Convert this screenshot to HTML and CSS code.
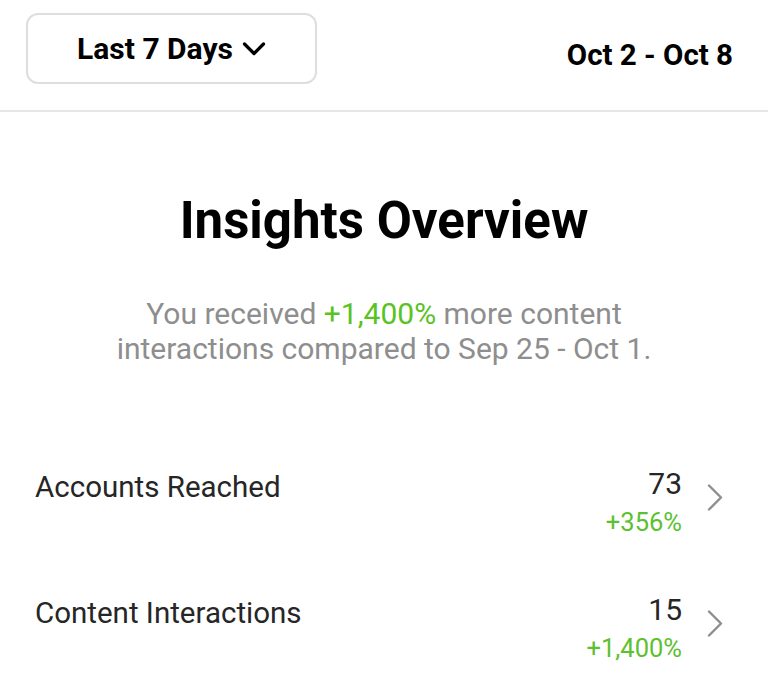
FILE: index.html
```html
<!DOCTYPE html>
<html>
<head>
<meta charset="utf-8">
<link rel="stylesheet" href="styles.css">
</head>
<body>
<header class="topbar">
  <button class="range-btn">
    <span class="range-label">Last 7 Days</span>
    <svg class="chev-down" width="24" height="16" viewBox="0 0 24 16"><path d="M2.5 3 L12 12.5 L21.5 3" fill="none" stroke="#000" stroke-width="3.2" stroke-linecap="round" stroke-linejoin="round"/></svg>
  </button>
  <div class="range-dates">Oct 2 - Oct 8</div>
</header>
<main class="content">
  <h1 class="title">Insights Overview</h1>
  <p class="summary">You received <span class="up">+1,400%</span> more content interactions compared to Sep 25 - Oct 1.</p>
  <ul class="metrics">
    <li class="metric">
      <span class="metric-name">Accounts Reached</span>
      <span class="metric-vals"><span class="metric-num">73</span><span class="metric-delta">+356%</span></span>
      <svg class="chev-right" width="16" height="27" viewBox="0 0 16 27"><path d="M2 1.5 L14 13.5 L2 25.5" fill="none" stroke="#8e8e8e" stroke-width="2.4" stroke-linecap="round" stroke-linejoin="round"/></svg>
    </li>
    <li class="metric">
      <span class="metric-name">Content Interactions</span>
      <span class="metric-vals"><span class="metric-num">15</span><span class="metric-delta">+1,400%</span></span>
      <svg class="chev-right" width="16" height="27" viewBox="0 0 16 27"><path d="M2 1.5 L14 13.5 L2 25.5" fill="none" stroke="#8e8e8e" stroke-width="2.4" stroke-linecap="round" stroke-linejoin="round"/></svg>
    </li>
  </ul>
</main>
</body>
</html>
```
FILE: styles.css
```css
* { box-sizing: border-box; }
html, body { margin: 0; padding: 0; background: #fff; }
body { font-family: Roboto, "Noto Sans", sans-serif; color: #000; width: 768px; height: 687px; overflow: hidden; }

.topbar {
  display: flex;
  align-items: center;
  justify-content: space-between;
  padding: 13px 35px 26px 26px;
  border-bottom: 2px solid #e6e6e6;
}
.range-btn {
  display: flex;
  align-items: center;
  justify-content: center;
  gap: 9px;
  width: 291px;
  height: 71px;
  border: 2px solid #dedede;
  border-radius: 12px;
  background: #fff;
  font-family: inherit;
  padding: 0;
}
.range-label { font-size: 30px; font-weight: 700; color: #000; line-height: 36px; }
.chev-down { display: block; }
.range-dates { font-size: 29.5px; font-weight: 700; line-height: 36px; padding-top: 12px; }

.content { padding: 0; }
.title {
  margin: 79px 0 0;
  text-align: center;
  font-size: 51px;
  font-weight: 700;
  line-height: 60px;
}
.summary {
  margin: 45px auto 0;
  width: 590px;
  text-align: center;
  color: #8e8e8e;
  font-size: 30px;
  line-height: 35px;
}
.up { color: #58c322; }

.metrics { list-style: none; margin: 100px 0 0; padding: 0 45px 0 35px; }
.metric {
  display: flex;
  align-items: flex-start;
  height: 126px;
}
.metric-name { flex: 1; font-size: 29.5px; line-height: 36px; padding-top: 3px; color: #262626; }
.metric-vals { display: flex; flex-direction: column; align-items: flex-end; }
.metric-num { font-size: 30px; line-height: 36px; color: #262626; }
.metric-delta { font-size: 25.5px; line-height: 30px; color: #5cc130; margin-top: 5px; }
.chev-right { display: block; margin: 18px 0 0 25px; }
```
